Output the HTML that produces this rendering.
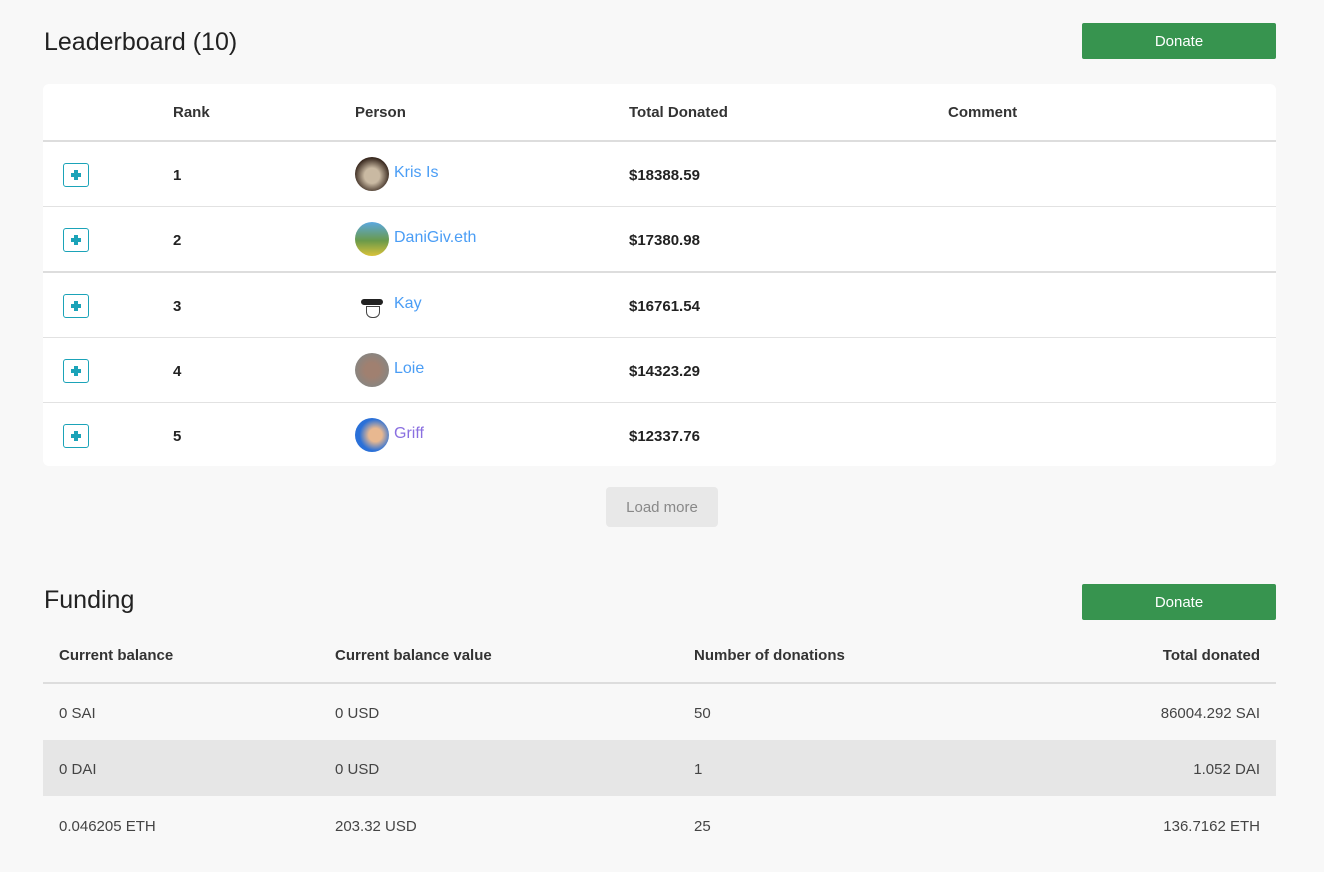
<!DOCTYPE html>
<html><head><style>
body{margin:0;background:#f8f8f8;font-family:"Liberation Sans",sans-serif;color:#222;width:1324px;height:872px;overflow:hidden;position:relative}
.abs{position:absolute}
h2{position:absolute;margin:0;font-weight:400;font-size:25px;color:#222}
.btn{position:absolute;left:1082px;width:194px;height:36px;background:#37944f;color:#fff;font-size:15px;text-align:center;line-height:38px;border-radius:2px}
.card{position:absolute;left:43px;top:84px;width:1233px;height:382px;background:#fff;border-radius:6px}
.th{position:absolute;font-size:15px;font-weight:700;color:#333}
.row{position:absolute;left:0;width:1233px;height:65px;border-top:1px solid #e2e2e2}
.plus{position:absolute;left:20px;top:21px;width:24px;height:22px;border:1px solid #1ba3b8;border-radius:3px}
.plus:before{content:"";position:absolute;left:7px;top:9px;width:10px;height:4px;background:#1ba3b8}
.plus:after{content:"";position:absolute;left:10px;top:6px;width:4px;height:10px;background:#1ba3b8}
.rk{position:absolute;left:130px;top:25px;font-size:15px;font-weight:700}
.av{position:absolute;left:312px;top:15px;width:34px;height:34px;border-radius:50%}
.nm{position:absolute;left:351px;top:22px;font-size:16px;color:#4a9df5}
.amt{position:absolute;left:586px;top:25px;font-size:15px;font-weight:700}
.fh{position:absolute;top:647px;font-size:15px;font-weight:700;color:#333}
.fr{position:absolute;left:43px;width:1233px;height:56px;font-size:15px;color:#444}
.fr span{position:absolute;top:21px}
</style></head><body>
<h2 style="left:44px;top:28px">Leaderboard (10)</h2>
<div class="btn" style="top:23px">Donate</div>
<div class="card">
<div class="th" style="left:130px;top:20px">Rank</div>
<div class="th" style="left:312px;top:20px">Person</div>
<div class="th" style="left:586px;top:20px">Total Donated</div>
<div class="th" style="left:905px;top:20px">Comment</div>
<div class="row" style="top:56px;border-top:2px solid #ddd"><div class="plus"></div><div class="rk">1</div><div class="av" style="background:radial-gradient(circle at 50% 55%,#c9b9a2 30%,#3a2a20 70%)"></div><div class="nm">Kris Is</div><div class="amt">$18388.59</div></div>
<div class="row" style="top:122px"><div class="plus"></div><div class="rk">2</div><div class="av" style="background:linear-gradient(#5ba8e0 0%,#6a9a4a 55%,#d9c23a 100%)"></div><div class="nm">DaniGiv.eth</div><div class="amt">$17380.98</div></div>
<div class="row" style="top:187px;border-top:2px solid #ddd"><div class="plus"></div><div class="rk">3</div><div class="av" style="background:#fff"><div style="position:absolute;left:6px;top:11px;width:22px;height:6px;background:#222;border-radius:3px"></div><div style="position:absolute;left:11px;top:18px;width:12px;height:10px;border:1px solid #444;border-radius:0 0 6px 6px"></div></div><div class="nm">Kay</div><div class="amt">$16761.54</div></div>
<div class="row" style="top:253px"><div class="plus"></div><div class="rk">4</div><div class="av" style="background:radial-gradient(circle at 50% 50%,#a08070 30%,#8a8580 70%)"></div><div class="nm">Loie</div><div class="amt">$14323.29</div></div>
<div class="row" style="top:318px"><div class="plus"></div><div class="rk">5</div><div class="av" style="background:radial-gradient(circle at 60% 50%,#e8b890 25%,#2a70d8 60%)"></div><div class="nm" style="color:#8a6fe0">Griff</div><div class="amt">$12337.76</div></div>
</div>
<div class="abs" style="left:606px;top:487px;width:112px;height:40px;background:#e8e8e8;border-radius:4px;color:#888;font-size:15px;text-align:center;line-height:42px">Load more</div>
<h2 style="left:44px;top:586px">Funding</h2>
<div class="btn" style="top:584px">Donate</div>
<div class="fh" style="left:59px">Current balance</div>
<div class="fh" style="left:335px">Current balance value</div>
<div class="fh" style="left:694px">Number of donations</div>
<div class="fh" style="right:64px">Total donated</div>
<div class="abs" style="left:43px;top:682px;width:1233px;height:2px;background:#ddd"></div>
<div class="fr" style="top:684px"><span style="left:16px">0 SAI</span><span style="left:292px">0 USD</span><span style="left:651px">50</span><span style="right:16px">86004.292 SAI</span></div>
<div class="fr" style="top:740px;background:#e6e6e6"><span style="left:16px">0 DAI</span><span style="left:292px">0 USD</span><span style="left:651px">1</span><span style="right:16px">1.052 DAI</span></div>
<div class="fr" style="top:797px"><span style="left:16px">0.046205 ETH</span><span style="left:292px">203.32 USD</span><span style="left:651px">25</span><span style="right:16px">136.7162 ETH</span></div>
</body></html>
